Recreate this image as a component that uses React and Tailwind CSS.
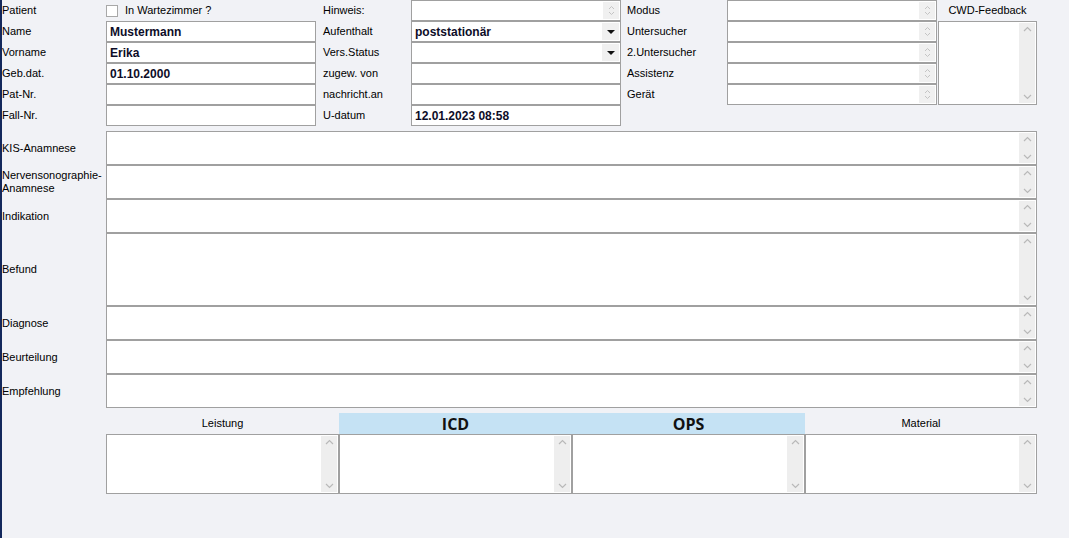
import React from 'react';

const FONT = { fontFamily: '"Liberation Sans", Arial, sans-serif' };

function Up() {
  return (
    <svg width="9" height="6" viewBox="0 0 9 6">
      <path d="M1 5 L4.5 1.5 L8 5" fill="none" stroke="#b9b9b9" strokeWidth="1.2" />
    </svg>
  );
}

function Down() {
  return (
    <svg width="9" height="6" viewBox="0 0 9 6">
      <path d="M1 1 L4.5 4.5 L8 1" fill="none" stroke="#b9b9b9" strokeWidth="1.2" />
    </svg>
  );
}

function ScrollBar() {
  return (
    <div className="w-[16px] my-[1px] mr-[1px] bg-[#eeeeee] flex flex-col items-center justify-between py-[3px]">
      <Up />
      <Down />
    </div>
  );
}

function MiniSpin() {
  return (
    <div className="w-[16px] my-[1px] mr-[1px] bg-[#f0f0f0] flex flex-col items-center justify-center gap-[1px]">
      <svg width="7" height="5" viewBox="0 0 7 5"><path d="M1 4 L3.5 1.5 L6 4" fill="none" stroke="#c4c4c4" /></svg>
      <svg width="7" height="5" viewBox="0 0 7 5"><path d="M1 1 L3.5 3.5 L6 1" fill="none" stroke="#c4c4c4" /></svg>
    </div>
  );
}

function DropBtn() {
  return (
    <div className="w-[17px] my-[1px] mr-[1px] bg-[#f0f0f0] flex items-center justify-center">
      <svg width="8" height="4" viewBox="0 0 8 4"><path d="M0 0 H8 L4 4 Z" fill="#111" /></svg>
    </div>
  );
}

function Field({ value, spin, drop }) {
  return (
    <div className="h-[21px] w-[210px] border border-[#a0a0a0] bg-white flex">
      <div className="flex-1 flex items-center pl-[3px] text-[12px] font-bold text-[#0d0d28]">{value}</div>
      {spin && <MiniSpin />}
      {drop && <DropBtn />}
    </div>
  );
}

function Row({ label, width, children }) {
  return (
    <div className="flex items-center h-[21px]">
      <div className="text-[11px] text-black" style={{ width }}>{label}</div>
      {children}
    </div>
  );
}

const big = [
  { label: 'KIS-Anamnese', h: 'h-[34px]' },
  { label: <>Nervensonographie-<br />Anamnese</>, h: 'h-[34px]' },
  { label: 'Indikation', h: 'h-[34px]' },
  { label: 'Befund', h: 'h-[73px]' },
  { label: 'Diagnose', h: 'h-[34px]' },
  { label: 'Beurteilung', h: 'h-[34px]' },
  { label: 'Empfehlung', h: 'h-[34px]' },
];

export default function App() {
  return (
    <div className="w-[1069px] h-[538px] bg-[#f1f2f6] border-l-2 border-[#13285c] overflow-hidden" style={FONT}>
      {/* top block */}
      <div className="flex h-[126px]">
        <div className="flex flex-col">
          <div className="flex items-center h-[21px]">
            <div className="w-[104px] text-[11px]">Patient</div>
            <div className="w-[12px] h-[12px] border border-[#a8a8a8] bg-white" />
            <div className="ml-[7px] text-[11px]">In Wartezimmer ?</div>
          </div>
          <Row label="Name" width={104}><Field value="Mustermann" /></Row>
          <Row label="Vorname" width={104}><Field value="Erika" /></Row>
          <Row label="Geb.dat." width={104}><Field value="01.10.2000" /></Row>
          <Row label="Pat-Nr." width={104}><Field /></Row>
          <Row label="Fall-Nr." width={104}><Field /></Row>
        </div>

        <div className="flex flex-col ml-[7px]">
          <Row label="Hinweis:" width={88}><Field spin /></Row>
          <Row label="Aufenthalt" width={88}><Field value="poststationär" drop /></Row>
          <Row label="Vers.Status" width={88}><Field drop /></Row>
          <Row label="zugew. von" width={88}><Field /></Row>
          <Row label="nachricht.an" width={88}><Field /></Row>
          <Row label="U-datum" width={88}><Field value="12.01.2023 08:58" /></Row>
        </div>

        <div className="flex flex-col ml-[6px]">
          <Row label="Modus" width={100}><Field spin /></Row>
          <Row label="Untersucher" width={100}><Field spin /></Row>
          <Row label="2.Untersucher" width={100}><Field spin /></Row>
          <Row label="Assistenz" width={100}><Field spin /></Row>
          <Row label="Gerät" width={100}><Field spin /></Row>
        </div>

        <div className="flex flex-col ml-px w-[99px]">
          <div className="h-[21px] flex items-center justify-center text-[11px]">CWD-Feedback</div>
          <div className="h-[84px] border border-[#a0a0a0] bg-white flex">
            <div className="flex-1" />
            <ScrollBar />
          </div>
        </div>
      </div>

      {/* text areas */}
      <div className="mt-[5px] flex flex-col">
        {big.map((b, i) => (
          <div key={i} className="flex">
            <div className="w-[104px] flex items-center text-[11px] leading-[13px]">{b.label}</div>
            <div className={`w-[931px] ${b.h} border border-[#a0a0a0] bg-white flex`}>
              <div className="flex-1" />
              <ScrollBar />
            </div>
          </div>
        ))}
      </div>

      {/* bottom lists */}
      <div className="mt-[5px] ml-[104px] grid grid-cols-[233px_233px_233px_232px]">
        <div className="h-[21px] flex items-center justify-center text-[11px]">Leistung</div>
        <div className="h-[21px] flex items-center justify-center bg-[#c5e2f4] text-[16px] font-bold text-[#111]" style={{ fontFamily: '"Open Sans", sans-serif' }}>ICD</div>
        <div className="h-[21px] flex items-center justify-center bg-[#c5e2f4] text-[16px] font-bold text-[#111]" style={{ fontFamily: '"Open Sans", sans-serif' }}>OPS</div>
        <div className="h-[21px] flex items-center justify-center text-[11px]">Material</div>
        {[0, 1, 2, 3].map(i => (
          <div key={i} className="h-[60px] border border-[#a0a0a0] bg-white flex">
            <div className="flex-1" />
            <ScrollBar />
          </div>
        ))}
      </div>
    </div>
  );
}
